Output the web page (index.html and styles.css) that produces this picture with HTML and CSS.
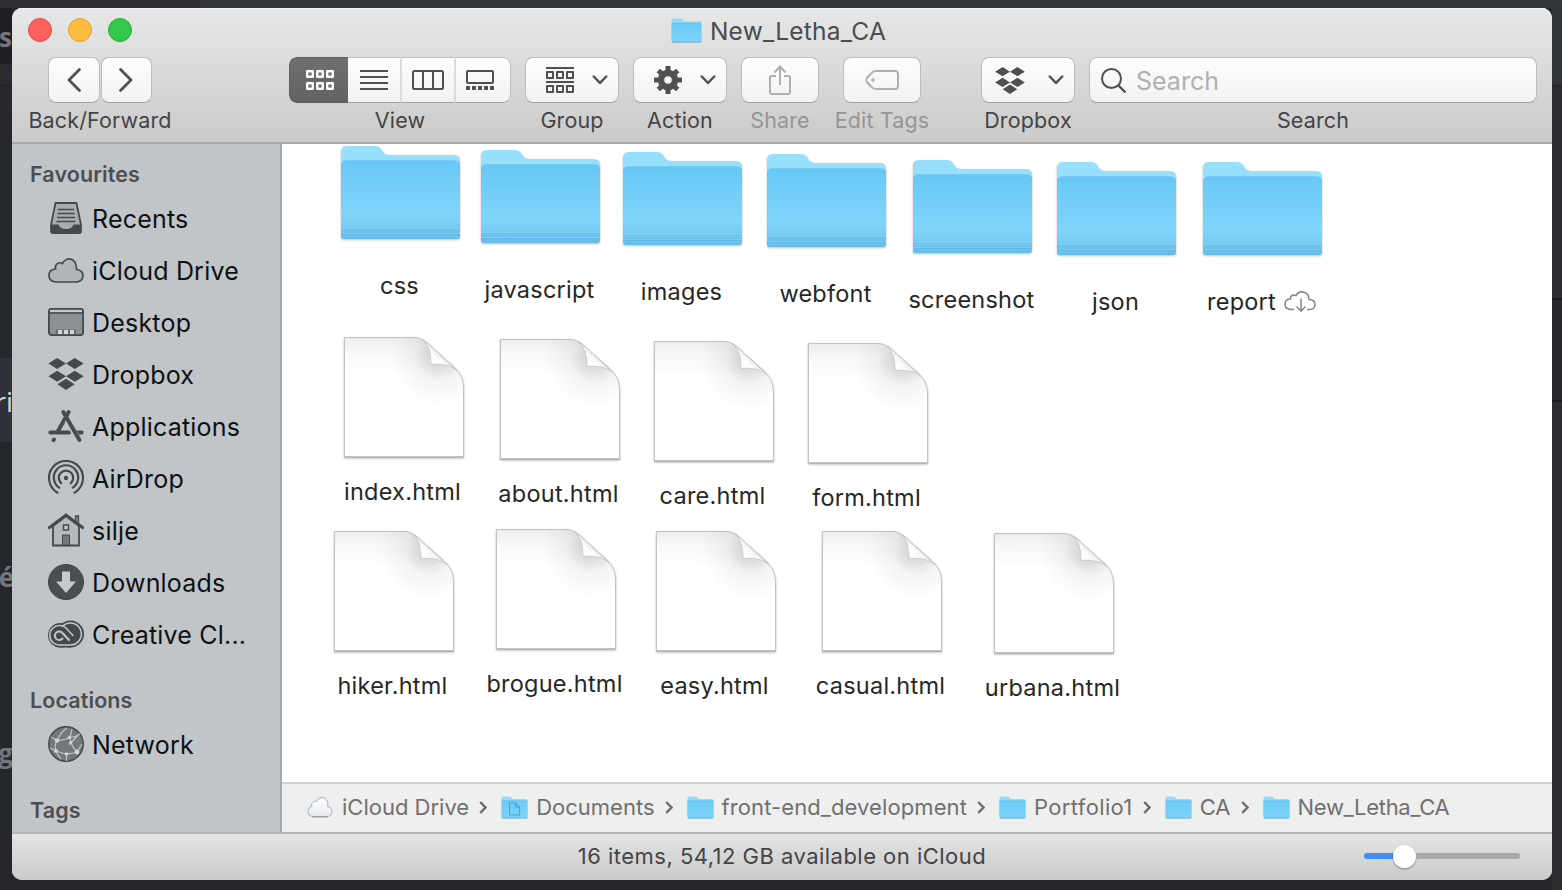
FILE: index.html
```html
<!DOCTYPE html>
<html lang="en">
<head>
<meta charset="utf-8">
<title>New_Letha_CA</title>
<link rel="stylesheet" href="styles.css">
</head>
<body>
<svg class="sprite" width="0" height="0" aria-hidden="true">
  <defs>
    <linearGradient id="g-front" x1="0" y1="0" x2="0" y2="1">
      <stop offset="0" stop-color="#68c8f5"/><stop offset=".1" stop-color="#6bcaf6"/><stop offset=".7" stop-color="#80d4fa"/><stop offset=".88" stop-color="#74caf2"/><stop offset="1" stop-color="#64bbe8"/>
    </linearGradient>
    <linearGradient id="g-small" x1="0" y1="0" x2="0" y2="1">
      <stop offset="0" stop-color="#6bcbf6"/><stop offset="1" stop-color="#7fd4fa"/>
    </linearGradient>
    <linearGradient id="g-top" x1="0" y1="0" x2="0" y2="1">
      <stop offset="0" stop-color="#ececec"/><stop offset=".1" stop-color="#f7f7f7"/><stop offset=".3" stop-color="#fff"/>
    </linearGradient>
    <radialGradient id="g-curl" gradientUnits="userSpaceOnUse" cx="95" cy="19" r="50">
      <stop offset="0" stop-color="#000" stop-opacity=".14"/><stop offset=".25" stop-color="#000" stop-opacity=".12"/><stop offset=".5" stop-color="#000" stop-opacity=".045"/><stop offset="1" stop-color="#000" stop-opacity="0"/>
    </radialGradient>
    <linearGradient id="g-flap" gradientUnits="userSpaceOnUse" x1="87" y1="28" x2="98" y2="17">
      <stop offset="0" stop-color="#fff"/><stop offset=".6" stop-color="#fbfbfb"/><stop offset="1" stop-color="#e6e6e6"/>
    </linearGradient>
    <linearGradient id="g-cloud" x1="0" y1="0" x2="0" y2="1">
      <stop offset="0" stop-color="#fff"/><stop offset="1" stop-color="#e6eaf0"/>
    </linearGradient>
  </defs>
  <symbol id="folder" viewBox="0 0 119 93">
    <path d="M0 90V6Q0 0 6 0H34C42 0 40 9 48 9H113Q119 9 119 15V90Q119 93 116 93H3Q0 93 0 90Z" fill="#98defd"/>
    <path d="M0 90V20Q0 15 5 15H114Q119 15 119 20V90Q119 93 116 93H3Q0 93 0 90Z" fill="url(#g-front)"/>
    <path d="M.5 20Q.5 14.700 5.500 14.700H113.500Q118.500 14.700 118.500 20" fill="none" stroke="#62bfeb" stroke-width=".7"/>
    <path d="M0 83.300H119M0 86H119M0 88.500H119" stroke="#5fb5e2" stroke-width=".7"/>
    <path d="M0 82.400H119M0 87.200H119" stroke="#8bd8fa" stroke-width=".6"/>
  </symbol>
  <symbol id="folder-s" viewBox="0 0 31 25" preserveAspectRatio="none">
    <path d="M.5 22V2.500Q.5 .5 2.500 .5H9.500Q11 .5 12 2T13.500 3.300H28.500Q30.500 3.300 30.500 5V22Q30.500 24 29 24H2Q.5 24 .5 22Z" fill="#94dbfb"/>
    <path d="M.5 5.500H30.500V22.500Q30.500 24 29 24H2Q.5 24 .5 22.500Z" fill="url(#g-small)"/>
    <path d="M1 5.300H30" stroke="#58b8e8" stroke-width=".8"/>
    <path d="M1 24H30" stroke="#559fc6" stroke-width=".9"/>
  </symbol>
  <symbol id="page" viewBox="0 0 120 121">
    <path d="M.5 .5H70C77 .5 82 4.500 86 8.500L110 30C117 36.500 119.500 43 119.500 52V120H.5Z" fill="url(#g-top)"/>
    <path d="M.5 .5H70C77 .5 82 4.500 86 8.500L110 30C117 36.500 119.500 43 119.500 52V120H.5Z" fill="url(#g-curl)" stroke="#c2c2c2" stroke-width="1"/>
    <path d="M78.500 3C85 9 87 16 87 27.500C98 26.500 107 28.500 113 33.500L86 8.500Z" fill="url(#g-flap)" stroke="#c4c4c4" stroke-width=".8"/>
    <path d="M.5 120H119.500" stroke="#a4a4a4" stroke-width="1"/>
  </symbol>
  <symbol id="dropbox" viewBox="0 0 36 32">
    <path d="M9.200 0L18 5.500 9.200 11 .4 5.500ZM26.800 0L35.600 5.500 26.800 11 18 5.500ZM9.200 12.800L18 18.300 9.200 23.800 .4 18.300ZM26.800 12.800L35.600 18.300 26.800 23.800 18 18.300ZM18 20.800L26.600 26.300 18 32 9.400 26.300Z" fill="currentColor"/>
  </symbol>
  <symbol id="chev" viewBox="0 0 16 10"><path d="M1.800 1.500L8 8 14.200 1.500" fill="none" stroke="currentColor" stroke-width="2.500" stroke-linecap="round" stroke-linejoin="round"/></symbol>
  <symbol id="sep" viewBox="0 0 8 13"><path d="M1.200 1L6.500 6.500 1.200 12" fill="none" stroke="#6b6b6b" stroke-width="2.400"/></symbol>
</svg>

<div class="backdrop">
  <div class="edge-top"></div>
  <div class="edge-left"><span class="peek peek-s">s</span><span class="peek peek-ri">ri</span><span class="peek peek-e">é</span><span class="peek peek-g">g</span></div>
  <div class="edge-right"></div>
</div>

<main class="window">
  <header class="titlebar">
    <div class="lights"><i class="light red"></i><i class="light amber"></i><i class="light green"></i></div>
    <h1 class="title"><svg width="31" height="25"><use href="#folder-s"/></svg><span>New_Letha_CA</span></h1>
    <div class="toolbar">
      <div class="tool nav">
        <div class="pair">
          <button class="btn"><svg width="16" height="26" viewBox="0 0 16 26"><path d="M13.500 2.500L3 13 13.500 23.500" class="arrow"/></svg></button>
          <button class="btn"><svg width="16" height="26" viewBox="0 0 16 26"><path d="M2.500 2.500L13 13 2.500 23.500" class="arrow"/></svg></button>
        </div>
        <span class="label">Back/Forward</span>
      </div>
      <div class="tool view">
        <div class="segments">
          <button class="seg active"><svg width="28" height="20" viewBox="0 0 28 20" class="boxes"><path d="M1.200 1.200h5.600v5.600h-5.600zM11.200 1.200h5.600v5.600h-5.600zM21.200 1.200h5.600v5.600h-5.600zM1.200 13.200h5.600v5.600h-5.600zM11.200 13.200h5.600v5.600h-5.600zM21.200 13.200h5.600v5.600h-5.600z"/></svg></button>
          <button class="seg list"><svg width="28" height="20" viewBox="0 0 28 20" class="line2"><path d="M0 1h28M0 7h28M0 13h28M0 19h28"/></svg></button>
          <button class="seg columns"><svg width="32" height="20" viewBox="0 0 32 20" class="line2"><rect x="1" y="1" width="30" height="18" rx="1.500"/><path d="M11 1v18M21 1v18"/></svg></button>
          <button class="seg gallery"><svg width="28" height="20" viewBox="0 0 28 20" class="line2"><rect x="1" y="1" width="26" height="12" rx="1"/><path d="M0 18h28" stroke-width="4" stroke-dasharray="4 2"/></svg></button>
        </div>
        <span class="label">View</span>
      </div>
      <div class="tool group">
        <button class="btn menu"><svg width="28" height="26" viewBox="0 0 28 26" class="line2"><path d="M0 1h28M0 15h28"/><path stroke-linejoin="round" d="M1 5h6v6h-6zM11 5h6v6h-6zM21 5h6v6h-6zM1 19h6v6h-6zM11 19h6v6h-6zM21 19h6v6h-6z"/></svg><svg width="16" height="10"><use href="#chev"/></svg></button>
        <span class="label">Group</span>
      </div>
      <div class="tool action">
        <button class="btn menu"><svg width="28" height="28" viewBox="-14 -14 28 28"><circle r="7" fill="none" stroke="currentColor" stroke-width="6.500"/><path d="M0-14V-9M0 14V9M-14 0H-9M14 0H9M-9.600-9.600L-6-6M9.600 9.600L6 6M-9.600 9.600L-6 6M9.600-9.600L6-6" stroke="currentColor" stroke-width="5"/></svg><svg width="16" height="10"><use href="#chev"/></svg></button>
        <span class="label">Action</span>
      </div>
      <div class="tool share off">
        <button class="btn"><svg width="22" height="30" viewBox="0 0 22 30" class="line2"><path d="M7 11H2.500Q1 11 1 12.500V27.500Q1 29 2.500 29H19.500Q21 29 21 27.500V12.500Q21 11 19.500 11H15M11 20V1.500M5.500 7.500L11 1.500 16.500 7.500"/></svg></button>
        <span class="label">Share</span>
      </div>
      <div class="tool tags off">
        <button class="btn"><svg width="34" height="20" viewBox="0 0 34 20" class="line2"><path d="M11 1H30Q33 1 33 4V16Q33 19 30 19H11Q8 19 6 16.500L2 12Q.5 10 2 8L6 3.500Q8 1 11 1Z"/><circle cx="8" cy="10" r="1.800" fill="currentColor" stroke="none"/></svg></button>
        <span class="label">Edit Tags</span>
      </div>
      <div class="tool drop">
        <button class="btn menu"><svg width="32" height="27"><use href="#dropbox"/></svg><svg width="16" height="10"><use href="#chev"/></svg></button>
        <span class="label">Dropbox</span>
      </div>
      <div class="tool search">
        <div class="btn field"><svg width="26" height="26" viewBox="0 0 26 26" class="line2"><circle cx="10.500" cy="10.500" r="9.500"/><path d="M17.500 17.500L24.500 24.500" stroke-width="2.400"/></svg><span class="hint">Search</span></div>
        <span class="label">Search</span>
      </div>
    </div>
  </header>

  <div class="body">
    <nav class="sidebar">
      <h2 class="heading">Favourites</h2>
      <a class="place"><svg width="36" height="36" viewBox="0 0 36 36"><path d="M7.500 3H28.500L33 25V31Q33 33 31 33H5Q3 33 3 31V25Z" fill="#a9adaf" stroke="#45494c" stroke-width="1.800" stroke-linejoin="round"/><path d="M3 24.500H10.500Q12 29 18 29T25.500 24.500H33V31Q33 33 31 33H5Q3 33 3 31Z" fill="#45494c"/><path d="M10 9.500H26M9.500 13.500H26.500M9 17.500H27M8.500 21.500H27.500" stroke="#45494c" stroke-width="1.700"/></svg><span>Recents</span></a>
      <a class="place"><svg width="36" height="36" viewBox="0 0 36 36"><path d="M8.500 30Q1 29.500 1 23.500T7.500 17C6.500 12 11 9.500 14.500 11.500C18 4.500 28.500 5 28.500 17.500C33 18 35 20.500 35 24Q34.500 29.500 28 30Z" fill="#b1b5b8" stroke="#45494c" stroke-width="1.700"/></svg><span>iCloud Drive</span></a>
      <a class="place"><svg width="36" height="36" viewBox="0 0 36 36"><rect x=".9" y="4.900" width="34.200" height="26.200" rx="2.500" fill="#8d9193" stroke="#45494c" stroke-width="1.800"/><path d="M2 7H34" stroke="#c4c8ca" stroke-width="2.200"/><path d="M1 9H35" stroke="#45494c" stroke-width="1.700"/><path d="M8 30V25.500H28V30Z" fill="#666a6c"/><path d="M10 30V26H14V30ZM16 30V26H20V30ZM22 30V26H26V30Z" fill="#d4d8da"/></svg><span>Desktop</span></a>
      <a class="place"><svg width="36" height="32"><use href="#dropbox"/></svg><span>Dropbox</span></a>
      <a class="place"><svg width="36" height="36" viewBox="0 0 36 36" fill="none" stroke="#484c4f" stroke-width="4" stroke-linecap="round"><path d="M20.700 4L10 23M2.300 24.500H21M28 24.500H33.700M6 31.500L5.500 32.200"/><path d="M19 12L29 29" stroke="#c1c5c8" stroke-width="5.600" stroke-linecap="butt"/><path d="M15.300 4L31.500 32"/></svg><span>Applications</span></a>
      <a class="place"><svg width="36" height="36" viewBox="0 0 36 36" fill="none" stroke="#45494c" stroke-width="2.200" stroke-linecap="round"><path d="M9.500 32.700A17 17 0 1 1 26.500 32.700M11.200 27.600A12.200 12.200 0 1 1 24.800 27.600M13.200 23.200A7.200 7.200 0 1 1 22.800 23.200"/><circle cx="18" cy="18" r="2.200" fill="#45494c" stroke="none"/></svg><span>AirDrop</span></a>
      <a class="place"><svg width="36" height="36" viewBox="0 0 36 36"><path d="M5 14V33.500H31V14L18 4Z" fill="#b5b9bc" stroke="#45494c" stroke-width="1.800"/><path d="M27.500 10V4H30.500V12" fill="#8d9193" stroke="#45494c" stroke-width="1.300"/><path d="M1.500 15.500L18 3.200 34.500 15.500" fill="none" stroke="#45494c" stroke-width="3" stroke-linecap="square"/><path d="M15.500 13H20.500V18H15.500Z" fill="#c4c8ca" stroke="#45494c" stroke-width="1.500"/><path d="M14.500 33V23H21.500V33Z" fill="#74787a" stroke="#45494c"/></svg><span>silje</span></a>
      <a class="place"><svg width="36" height="36" viewBox="0 0 36 36"><circle cx="18" cy="18" r="17.500" fill="#4a4e51" stroke="#3f4346"/><path d="M14 7.500H22V17.500H28L18 29 8 17.500H14Z" fill="#c6cacc"/></svg><span>Downloads</span></a>
      <a class="place"><svg width="36" height="36" viewBox="0 0 36 36" fill="none"><g fill="#45494c"><circle cx="12.300" cy="19.200" r="12.300"/><circle cx="22.500" cy="18" r="13.500"/><path d="M12 20H23V31.500H12Z"/></g><g stroke="#c1c5c8" stroke-width="1.600" stroke-linecap="round"><path d="M12.500 29H22.500A11 11 0 1 0 14.500 10.300"/><path d="M12.500 29A9.800 9.800 0 1 1 12.500 9.500Q15.500 9.500 18 12L25 19.500"/><path d="M21 24L14.500 17A4.300 4.300 0 1 0 14.500 22.500" stroke-width="2"/></g></svg><span>Creative Cl...</span></a>
      <h2 class="heading loc">Locations</h2>
      <a class="place"><svg width="36" height="36" viewBox="0 0 36 36"><circle cx="18" cy="18" r="17.200" fill="#74787a" stroke="#45494c" stroke-width="1.500"/><g fill="none" stroke="#c1c5c8" stroke-width="1.200"><path d="M3 11L9 14.500Q17 14 22 11.500L24 3M9 14.500Q13 6 19 2M22 11.500Q28 11 32 8M9 14.500Q6 20 8 25T13 33M8 25L2 22M8 25Q20 30 29 26L34 18M18.500 28V35M22 11.500Q23 20 29 26M22 18L31 8"/></g><g fill="#d0d4d6"><circle cx="9" cy="14.500" r="2.300"/><circle cx="21.500" cy="11.500" r="1.800"/><circle cx="22.300" cy="17" r="1.500"/><circle cx="8" cy="25" r="2"/><circle cx="18.500" cy="28" r="1.800"/><circle cx="29" cy="26" r="2.400"/></g></svg><span>Network</span></a>
      <h2 class="heading tagh">Tags</h2>
    </nav>

    <section class="content">
      <div class="canvas">
        <figure class="item folder" style="left:59px;top:2px"><svg><use href="#folder"/></svg><figcaption>css</figcaption></figure>
        <figure class="item folder" style="left:199px;top:6px"><svg><use href="#folder"/></svg><figcaption>javascript</figcaption></figure>
        <figure class="item folder" style="left:341px;top:8px"><svg><use href="#folder"/></svg><figcaption>images</figcaption></figure>
        <figure class="item folder" style="left:485px;top:10px"><svg><use href="#folder"/></svg><figcaption>webfont</figcaption></figure>
        <figure class="item folder" style="left:631px;top:16px"><svg><use href="#folder"/></svg><figcaption>screenshot</figcaption></figure>
        <figure class="item folder" style="left:775px;top:18px"><svg><use href="#folder"/></svg><figcaption>json</figcaption></figure>
        <figure class="item folder" style="left:921px;top:18px"><svg><use href="#folder"/></svg><figcaption>report<svg class="fetch" viewBox="0 0 32 22"><path d="M10 18.500H7Q1 18 1 13T6.500 8C6 4.500 9 3.300 12 4.500C15-1 24.500-.5 25 8.500C29 8.500 31 11 31 14Q30.500 18.500 25.500 18.500H23M17 7.500V20M12.500 15.500L17 20.200 21.500 15.500" fill="none" stroke="#858585" stroke-width="1.500"/></svg></figcaption></figure>

        <figure class="item page" style="left:62px;top:193px"><svg><use href="#page"/></svg><figcaption>index.html</figcaption></figure>
        <figure class="item page" style="left:218px;top:195px"><svg><use href="#page"/></svg><figcaption>about.html</figcaption></figure>
        <figure class="item page" style="left:372px;top:197px"><svg><use href="#page"/></svg><figcaption>care.html</figcaption></figure>
        <figure class="item page" style="left:526px;top:199px"><svg><use href="#page"/></svg><figcaption>form.html</figcaption></figure>

        <figure class="item page" style="left:52px;top:387px"><svg><use href="#page"/></svg><figcaption>hiker.html</figcaption></figure>
        <figure class="item page" style="left:214px;top:385px"><svg><use href="#page"/></svg><figcaption>brogue.html</figcaption></figure>
        <figure class="item page" style="left:374px;top:387px"><svg><use href="#page"/></svg><figcaption>easy.html</figcaption></figure>
        <figure class="item page" style="left:540px;top:387px"><svg><use href="#page"/></svg><figcaption>casual.html</figcaption></figure>
        <figure class="item page" style="left:712px;top:389px"><svg><use href="#page"/></svg><figcaption>urbana.html</figcaption></figure>
      </div>
      <div class="path">
        <svg width="26" height="22" viewBox="0 0 26 22"><path d="M6.500 20.500Q1 20.500 1 15.500Q1 11.500 4.500 10.500C4 6.500 7 4.500 9.500 5.500C12-.5 20.500 .5 21 8C21 9 20.500 10 20.500 10.500C23.500 11 25 13 25 15.500Q25 20.500 19.500 20.500Z" fill="url(#g-cloud)" stroke="#a4acb8" stroke-width="1"/><path d="M5 21H21" stroke="#929aa6" stroke-width="1"/></svg><span class="crumb">iCloud Drive</span><svg class="sep"><use href="#sep"/></svg>
        <svg width="27" height="23" viewBox="0 0 27 23"><use href="#folder-s" width="27" height="23"/><path d="M8.500 7H14.500L18.500 11V19H8.500ZM14.500 7V11H18.500" fill="none" stroke="#45a5d6" stroke-width="1.100"/></svg><span class="crumb">Documents</span><svg class="sep"><use href="#sep"/></svg>
        <svg width="27" height="23"><use href="#folder-s"/></svg><span class="crumb wide">front-end_development</span><svg class="sep"><use href="#sep"/></svg>
        <svg width="27" height="23"><use href="#folder-s"/></svg><span class="crumb wider">Portfolio1</span><svg class="sep"><use href="#sep"/></svg>
        <svg width="27" height="23"><use href="#folder-s"/></svg><span class="crumb">CA</span><svg class="sep"><use href="#sep"/></svg>
        <svg width="27" height="23"><use href="#folder-s"/></svg><span class="crumb narrow">New_Letha_CA</span>
      </div>
    </section>
  </div>

  <footer class="status">
    <span class="summary">16 items, 54,12 GB available on iCloud</span>
    <div class="slider"><i class="fill"></i><i class="knob"></i><i class="rest"></i></div>
  </footer>
</main>
</body>
</html>
```
FILE: styles.css
```css
* { box-sizing: border-box; }
html, body { height: 100%; }
body {
  margin: 0;
  overflow: hidden;
  background: #26272b;
  font-family: Inter, "Liberation Sans", sans-serif;
  color: #262626;
  white-space: nowrap;
}
h1, h2, figure { margin: 0; font-weight: 400; }
button { padding: 0; margin: 0; font: inherit; }
svg { display: block; flex: none; }
.sprite { position: absolute; }

/* desktop showing around the window */
.backdrop { position: absolute; inset: 0; }
.edge-top { position: absolute; inset: 0 0 auto; height: 8px; background: linear-gradient(90deg, #2e2f34 200px, #33373c 200px); }
.edge-left {
  position: absolute; left: 0; top: 8px; bottom: 0; width: 12px; overflow: hidden;
  background: linear-gradient(#1e1f22 56px, #2a2b30 56px 76px, #232428 76px 78px, #27282c 78px 350px, #303138 350px 434px, #26272b 434px);
}
.edge-right {
  position: absolute; right: 0; top: 8px; bottom: 0; width: 10px;
  background: linear-gradient(#303338 77px, #232529 77px 79px, #2c2e33 79px 290px, #1c1d20 290px 292px, #27282c 292px 392px, #1c1d20 392px 394px, #2a2c30 394px);
}
.peek { position: absolute; right: 0; font: 700 26px/30px "Open Sans", sans-serif; color: #75767c; }
.peek-s { top: 14px; }
.peek-ri { top: 378px; right: -1px; color: #d8d9dc; font-weight: 400; font-size: 28px; }
.peek-e { top: 554px; right: -2px; }
.peek-g { top: 730px; right: -1px; }

.window {
  position: relative;
  display: flex; flex-direction: column;
  width: 1540px; height: 872px; margin: 8px 0 0 12px;
  border-radius: 10px; overflow: hidden;
  background: #fff;
}

/* title bar and toolbar */
.titlebar {
  height: 136px; flex: none;
  background: linear-gradient(#e7e7e7, #cbcbcb);
  border-bottom: 2px solid #a9a9a9;
  box-shadow: inset 0 1px #f6f6f6;
  display: grid; grid-template: 49px 1fr / 1fr;
}
.lights { grid-area: 1 / 1; display: flex; gap: 16px; padding: 10px 0 0 16px; }
.light { width: 24px; height: 24px; border-radius: 50%; border: 1px solid; }
.red { background: #fc615d; border-color: #e04b48; }
.amber { background: #fdbc40; border-color: #dfa033; }
.green { background: #34c84a; border-color: #24ac36; }
.title {
  grid-area: 1 / 1; justify-self: center; align-self: start;
  display: flex; align-items: center; gap: 8px; height: 45px; margin-right: 7px;
  font-size: 24.500px; letter-spacing: .24px; color: #4c4c4c;
}
.toolbar { display: flex; align-items: flex-start; color: #4f4f4f; padding-left: 36px; }
.tool { display: flex; flex-direction: column; align-items: center; flex: none; }
.label { font-size: 21.500px; letter-spacing: .14px; line-height: 26px; margin-top: 4px; color: #444; }
.btn {
  height: 46px; border: 1px solid #bcbcbc; border-bottom-color: #a2a2a2; border-radius: 8px;
  background: linear-gradient(#fdfdfd, #f2f2f2); color: #505050;
  display: flex; align-items: center; justify-content: center;
}
.tool .btn { width: 100%; }
.arrow { fill: none; stroke: #4f4f4f; stroke-width: 2.800; stroke-linecap: round; stroke-linejoin: round; }
.line2 { fill: none; stroke: currentColor; stroke-width: 2; }
.boxes { fill: none; stroke: currentColor; stroke-width: 2.400; stroke-linejoin: round; }
.pair { display: flex; gap: 1px; width: 104px; }
.nav { width: 104px; margin-right: 137px; }
.view { width: 222px; margin-right: 14px; }
.segments { display: flex; width: 100%; height: 46px; border-radius: 8px; overflow: hidden; }
.seg {
  height: 46px; flex: 0 0 54px; color: #505050;
  border: solid; border-width: 1px 0 1px 2px; border-color: #bcbcbc #bcbcbc #a2a2a2 #dcdcdc;
  background: linear-gradient(#fdfdfd, #f2f2f2);
  display: flex; align-items: center; justify-content: center;
}
.seg.active { flex-basis: 59px; background: linear-gradient(#6f6f6f, #636363); color: #fff; border: 1px solid #5f5f5f; border-right: 0; border-radius: 8px 0 0 8px; padding-left: 2px; }
.seg.list { border-left: 0; flex-basis: 52px; }
.seg.columns { padding-right: 1px; }
.seg.gallery { flex-basis: 57px; padding-right: 7px; border-right: 1px solid #bcbcbc; border-radius: 0 8px 8px 0; }
.menu { gap: 18px; padding-left: 9px; }
.group, .action { width: 94px; margin-right: 14px; }
.share { width: 78px; margin-right: 24px; }
.tags { width: 78px; margin-right: 60px; }
.drop { width: 94px; margin-right: 14px; }
.drop .menu { gap: 22px; padding-left: 12px; justify-content: flex-start; }
.search { width: 448px; }
.off .btn { color: #b0b0b0; }
.off .label { color: #959595; }
.tool .field { justify-content: flex-start; gap: 9px; padding: 2px 0 0 11px; font-size: 25px; color: #4f4f4f; }
.hint { color: #b0b0b0; }

/* sidebar */
.body { flex: 1; display: flex; min-height: 0; }
.sidebar { width: 270px; flex: none; background: #c1c5c8; border-right: 2px solid #a2a8ad; padding-top: 17px; color: #0e1112; }
.heading { font-size: 21.500px; font-weight: 600; letter-spacing: .1px; line-height: 26px; padding-left: 18px; margin-bottom: 6px; color: #4b4f52; }
.loc { margin-top: 26px; margin-bottom: 6px; }
.tagh { margin-top: 26px; }
.place { display: flex; align-items: center; height: 52px; padding-left: 36px; gap: 8px; font-size: 25px; letter-spacing: .2px; }
.place svg { color: #45494c; margin-top: -2px; }

/* icon view */
.content { flex: 1; display: flex; flex-direction: column; min-width: 0; }
.canvas { position: relative; flex: 1; background: #fff; }
.item { position: absolute; width: 117px; }
.item > svg { filter: drop-shadow(0 1.500px 1px rgba(0, 0, 0, .25)); }
.folder > svg { width: 119px; height: 93px; }
.page > svg { width: 120px; height: 121px; overflow: visible; }
.item figcaption { display: flex; justify-content: center; align-items: center; gap: 8px; height: 30px; font-size: 23.500px; letter-spacing: .24px; }
.folder figcaption { margin-top: 31px; }
.page figcaption { margin-top: 18px; }
.fetch { width: 32px; height: 22px; margin-top: 2px; }

/* path bar */
.path { height: 50px; flex: none; background: #efefef; border-top: 2px solid #cfcfcf; display: flex; align-items: center; padding: 0 0 2px 25px; font-size: 22px; color: #707070; }
.crumb { margin: 0 10px 0 8px; }
.path svg:first-child + .crumb { margin-left: 9px; }
.wide { letter-spacing: .1px; }
.wider { letter-spacing: .35px; }
.narrow { letter-spacing: -.3px; }
.sep { width: 8px; height: 13px; margin-right: 14px; }

/* status bar */
.status { height: 48px; flex: none; background: linear-gradient(#e4e4e4, #cacaca); border-top: 2px solid #b5b5b5; display: grid; place-items: center; font-size: 22px; color: #444; padding-bottom: 2px; }
.status > * { grid-area: 1 / 1; }
.summary { letter-spacing: .47px; }
.slider { justify-self: end; display: flex; align-items: center; width: 156px; margin-right: 32px; }
.fill { width: 29px; height: 6px; border-radius: 3px 0 0 3px; background: #3f8cfa; }
.knob { width: 23px; height: 23px; border-radius: 50%; background: #fff; box-shadow: 0 1px 2px rgba(0, 0, 0, .4); }
.rest { flex: 1; height: 6px; border-radius: 0 3px 3px 0; background: #a8a8a8; }
```
